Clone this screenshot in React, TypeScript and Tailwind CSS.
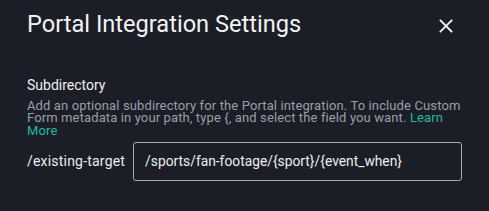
import React from "react";

export default function App() {
  return (
    <div className="w-[489px] h-[211px] bg-[#1b1e26] text-white overflow-hidden" style={{ fontFamily: "Roboto, sans-serif" }}>
      <div className="flex items-center justify-between pl-[27px] pr-[36px] pt-[10px] h-[40px]">
        <h1 className="text-[23.6px] leading-none text-[#f2f3f5]">Portal Integration Settings</h1>
        <svg width="14" height="14" viewBox="0 0 14 14" className="mt-[2px]">
          <path d="M1.5 1.5 L12.5 12.5 M12.5 1.5 L1.5 12.5" stroke="#f2f3f5" strokeWidth="1.8" strokeLinecap="square" />
        </svg>
      </div>
      <div className="pl-[27px] pr-[28px] pt-[37px]">
        <div className="text-[14px] leading-[16px] text-[#eceef1]">Subdirectory</div>
        <p className="mt-[7px] text-[13px] leading-[12.4px] text-[#9b9ea6] tracking-[0.12px]">
          Add an optional subdirectory for the Portal integration. To include Custom Form metadata in your path, type {"{"}, and select the field you want.{" "}
          <span className="text-[#27b5a4]">Learn More</span>
        </p>
        <div className="flex items-center mt-[5px] gap-[8px]">
          <span className="text-[14px] text-[#eceef1] tracking-[0.2px] whitespace-nowrap">/existing-target</span>
          <div className="shrink-0 w-[329px] h-[39px] border border-[#a5a8ae] rounded-[3px] flex items-center pl-[11px] text-[13.8px] text-[#eceef1] whitespace-nowrap">
            /sports/fan-footage/{"{sport}"}/{"{event_when}"}
          </div>
        </div>
      </div>
    </div>
  );
}
